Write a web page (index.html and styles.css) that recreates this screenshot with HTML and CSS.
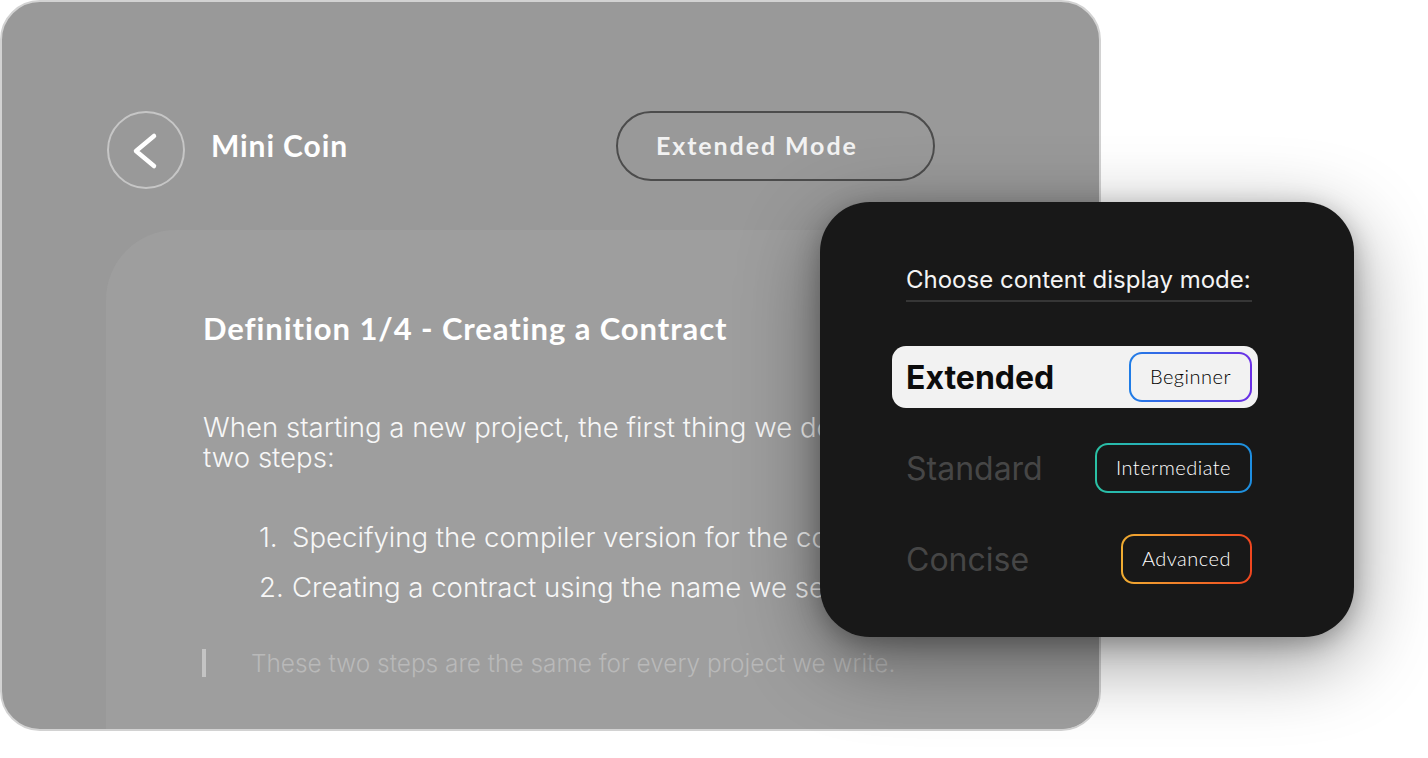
FILE: index.html
```html
<!DOCTYPE html>
<html lang="en">
<head>
<meta charset="utf-8">
<title>Mini Coin</title>
<link rel="stylesheet" href="styles.css">
</head>
<body>
<div class="stage">
  <div class="window">
    <header class="topbar">
      <div class="back">
        <svg width="74" height="74" viewBox="0 0 74 74"><polyline points="45,23 27,38 45,53" fill="none" stroke="#ffffff" stroke-width="4.5" stroke-linecap="round" stroke-linejoin="round"/></svg>
      </div>
      <div class="title">Mini Coin</div>
      <div class="mode-btn">Extended Mode</div>
    </header>
    <section class="card">
      <h1 class="heading">Definition 1/4 - Creating a Contract</h1>
      <p class="para"><span class="line">When starting a new project, the first thing we do is</span><span class="line">two steps:</span></p>
      <ol class="steps">
        <li><span class="num">1.</span>Specifying the compiler version for the code</li>
        <li><span class="num">2.</span>Creating a contract using the name we set</li>
      </ol>
      <blockquote class="quote">These two steps are the same for every project we write.</blockquote>
    </section>
  </div>

  <div class="popup">
    <div class="popup-head">Choose content display mode:</div>
    <div class="rows">
      <div class="row active">
        <span class="label">Extended</span>
        <span class="badge b-begin">Beginner</span>
      </div>
      <div class="row">
        <span class="label">Standard</span>
        <span class="badge b-mid">Intermediate</span>
      </div>
      <div class="row">
        <span class="label">Concise</span>
        <span class="badge b-adv">Advanced</span>
      </div>
    </div>
  </div>
</div>
</body>
</html>
```

FILE: styles.css
```css
* { box-sizing: border-box; }
html, body { margin: 0; padding: 0; background: #ffffff; }
body { width: 1428px; height: 758px; overflow: hidden; font-family: "Inter", "Liberation Sans", sans-serif; }

.stage { position: relative; width: 1428px; height: 758px; }

.window {
  width: 1101px;
  height: 731px;
  border: 2px solid #d2d2d2;
  border-radius: 40px;
  background: #999999;
  overflow: hidden;
}

.topbar {
  display: flex;
  align-items: flex-start;
  padding: 109px 0 0 105px;
}
.back {
  width: 78px;
  height: 78px;
  border: 2px solid #c6c6c6;
  border-radius: 50%;
  flex: none;
}
.back svg { display: block; }
.title {
  width: 405px;
  margin-left: 26px;
  margin-top: 16px;
  font-family: "Lato", "Liberation Sans", sans-serif;
  font-weight: 700;
  font-size: 30px;
  line-height: 36px;
  color: #ffffff;
  letter-spacing: 0.9px;
}
.mode-btn {
  width: 319px;
  height: 70px;
  border: 2px solid #4c4c4c;
  border-radius: 35px;
  padding-left: 38px;
  font-family: "Lato", "Liberation Sans", sans-serif;
  font-weight: 700;
  font-size: 25px;
  line-height: 64px;
  color: #f2f2f2;
  letter-spacing: 1.9px;
}

.card {
  margin: 41px 0 0 104px;
  height: 600px;
  background: #9e9e9e;
  border-radius: 70px 70px 0 0;
  padding: 81px 0 0 97px;
}
.heading {
  margin: 0;
  font-family: "Lato", "Liberation Sans", sans-serif;
  font-weight: 700;
  font-size: 31px;
  line-height: 34px;
  color: #ffffff;
  letter-spacing: 0.92px;
}
.para {
  margin: 67px 0 0 0;
  display: flex;
  flex-direction: column;
  font-size: 27.6px;
  font-weight: 300;
  line-height: 30px;
  color: #f7f7f7;
  white-space: nowrap;
}
.line { display: block; height: 30px; }
.steps {
  list-style: none;
  margin: 40px 0 0 56px;
  padding: 0;
}
.steps li {
  display: flex;
  font-size: 27.6px;
  font-weight: 300;
  line-height: 50px;
  color: #f7f7f7;
  white-space: nowrap;
}
.num { width: 33px; flex: none; }
.quote {
  margin: 37px 0 0 -1px;
  padding-left: 45px;
  border-left: 4px solid #c4c4c4;
  font-size: 24.4px;
  font-weight: 300;
  line-height: 28px;
  color: #b9b9b9;
  white-space: nowrap;
}

.popup {
  position: absolute;
  left: 820px;
  top: 202px;
  width: 534px;
  height: 435px;
  border-radius: 50px;
  background: #181818;
  box-shadow: 0 22px 80px rgba(0, 0, 0, 0.42), 0 6px 24px rgba(0, 0, 0, 0.25);
  padding: 64px 96px 0 72px;
}
.popup-head {
  margin: 0 6px 0 14px;
  padding-bottom: 6px;
  border-bottom: 2px solid #363636;
  font-size: 24px;
  font-weight: 400;
  line-height: 28px;
  color: #f4f4f4;
}
.rows {
  margin-top: 44px;
  display: flex;
  flex-direction: column;
  gap: 29px;
}
.row {
  height: 62px;
  display: flex;
  align-items: center;
  justify-content: space-between;
  padding: 0 6px 0 14px;
  border-radius: 14px;
}
.row.active { background: #f2f2f2; }
.label {
  font-size: 32px;
  font-weight: 400;
  color: #464646;
}
.row.active .label { font-weight: 700; color: #0c0c0c; }

.badge {
  height: 50px;
  display: flex;
  align-items: center;
  padding: 0 19px 2px 19px;
  border: 2px solid transparent;
  border-radius: 13px;
  font-family: "Lato", "Liberation Sans", sans-serif;
  font-size: 20px;
  font-weight: 300;
  letter-spacing: 0.5px;
}
.b-begin {
  color: #000000;
  background: linear-gradient(#f2f2f2, #f2f2f2) padding-box, linear-gradient(90deg, #1f7de6, #6b2ee6) border-box;
}
.b-mid {
  color: #ffffff;
  background: linear-gradient(#181818, #181818) padding-box, linear-gradient(90deg, #2ac1a4, #1e8ee2) border-box;
}
.b-adv {
  color: #ffffff;
  background: linear-gradient(#181818, #181818) padding-box, linear-gradient(90deg, #f0ad32, #f0461f) border-box;
}
```
